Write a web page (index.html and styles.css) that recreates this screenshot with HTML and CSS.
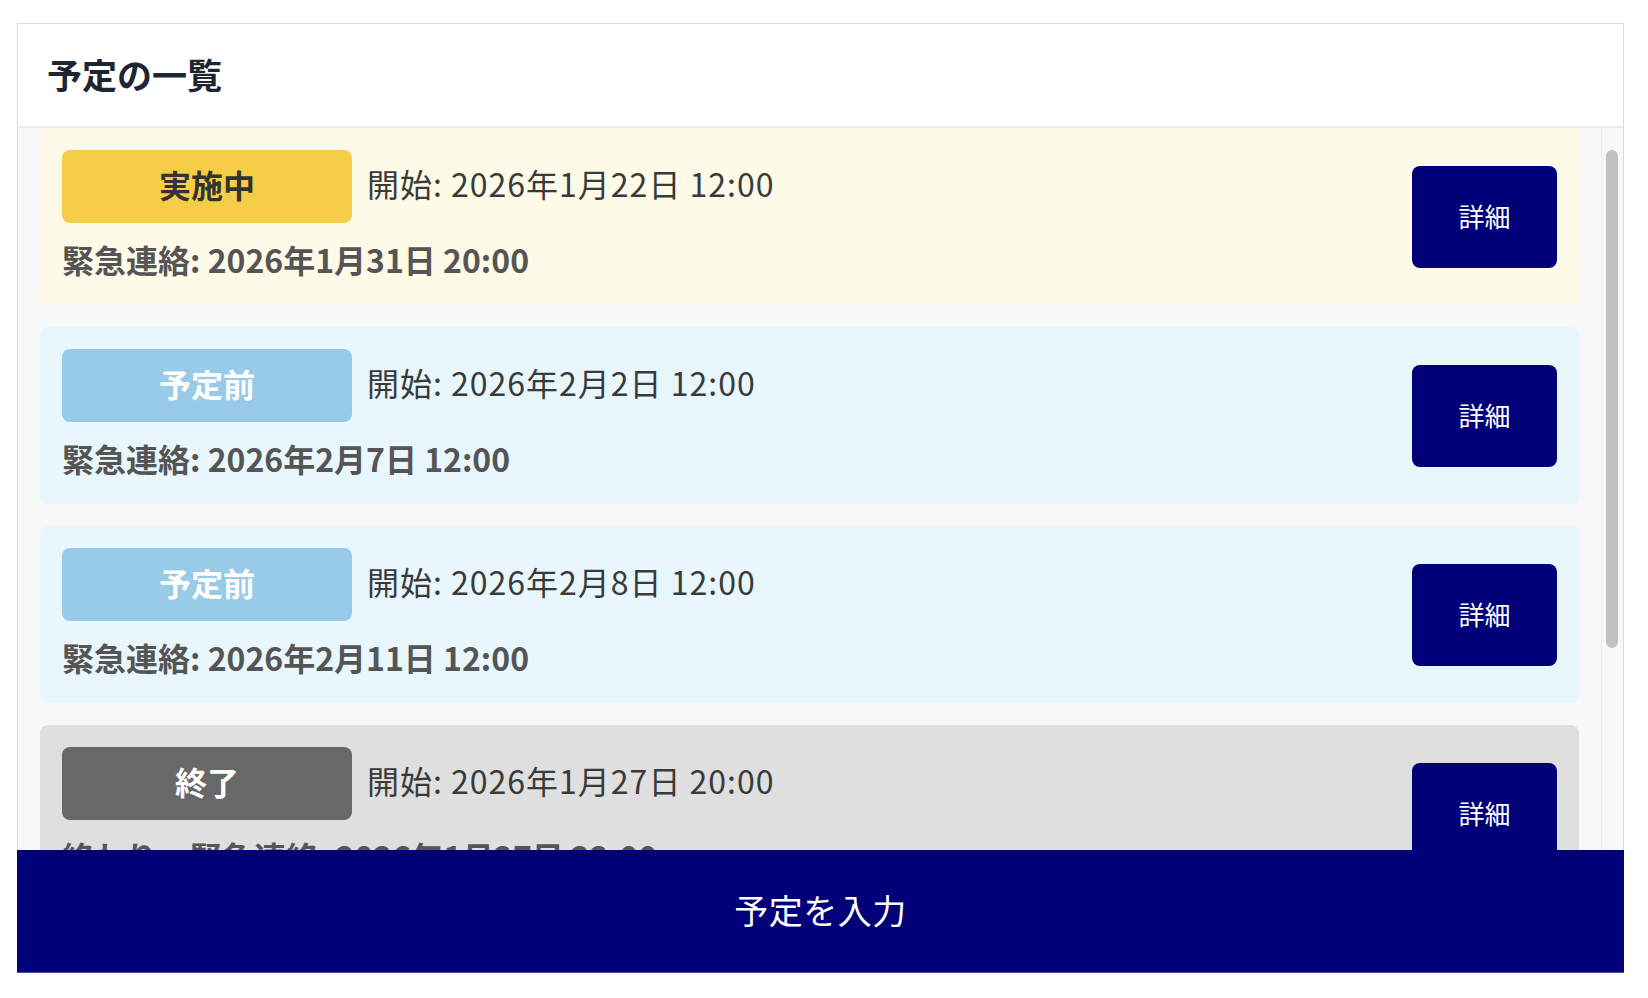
FILE: index.html
```html
<!DOCTYPE html>
<html lang="ja">
<head>
<meta charset="utf-8">
<title>予定の一覧</title>
<link rel="stylesheet" href="styles.css">
</head>
<body>
<div class="page">
  <section class="panel">
    <header class="panel-head">
      <h1 class="title">予定の一覧</h1>
    </header>
    <div class="body">
      <div class="list">
        <div class="card card-active">
          <div class="info">
            <div class="row">
              <span class="badge badge-active">実施中</span>
              <span class="start">開始: 2026年1月22日 12:00</span>
            </div>
            <div class="emergency">緊急連絡: 2026年1月31日 20:00</div>
          </div>
          <button class="detail">詳細</button>
        </div>
        <div class="card card-before">
          <div class="info">
            <div class="row">
              <span class="badge badge-before">予定前</span>
              <span class="start">開始: 2026年2月2日 12:00</span>
            </div>
            <div class="emergency">緊急連絡: 2026年2月7日 12:00</div>
          </div>
          <button class="detail">詳細</button>
        </div>
        <div class="card card-before">
          <div class="info">
            <div class="row">
              <span class="badge badge-before">予定前</span>
              <span class="start">開始: 2026年2月8日 12:00</span>
            </div>
            <div class="emergency">緊急連絡: 2026年2月11日 12:00</div>
          </div>
          <button class="detail">詳細</button>
        </div>
        <div class="card card-done">
          <div class="info">
            <div class="row">
              <span class="badge badge-done">終了</span>
              <span class="start">開始: 2026年1月27日 20:00</span>
            </div>
            <div class="emergency">終わり　緊急連絡: 2026年1月27日 22:00</div>
          </div>
          <button class="detail">詳細</button>
        </div>
      </div>
      <div class="scrollbar"><div class="thumb"></div></div>
    </div>
    <button class="add">予定を入力</button>
  </section>
</div>
</body>
</html>
```

FILE: styles.css
```css
* { box-sizing: border-box; }
html, body { margin: 0; padding: 0; background: #ffffff; }
body { font-family: "Noto Sans CJK JP", "Noto Sans", sans-serif; }

.page { padding: 23px 24px 25px 17px; }

.panel {
  height: 950px;
  border: 1px solid #dcdcdc;
  display: grid;
  grid-template-rows: 104px 1fr 122px;
  background: #fff;
}

.panel-head {
  border-bottom: 2px solid #ececec;
  display: flex;
  align-items: center;
  padding: 0 0 4px 29px;
}
.title {
  margin: 0;
  font-size: 35px;
  font-weight: 700;
  color: #1f2633;
  line-height: 1;
}

.body {
  display: flex;
  min-height: 0;
  overflow: hidden;
  background: #f8f8f8;
}
.list {
  flex: 1;
  padding: 0 22px;
  display: flex;
  flex-direction: column;
  gap: 22px;
  overflow: hidden;
}

.card {
  flex: none;
  display: flex;
  align-items: center;
  justify-content: space-between;
  padding: 22px;
  border-radius: 8px;
}
.card-active { background: #fefae8; }
.card-before { background: #e8f6fd; }
.card-done { background: #dfdfdf; }

.row { display: flex; align-items: center; gap: 15px; height: 73px; }

.badge {
  width: 290px;
  height: 73px;
  border-radius: 8px;
  display: flex;
  align-items: center;
  justify-content: center;
  padding-bottom: 5px;
  font-size: 32px;
  font-weight: 700;
}
.badge-active { background: #f6cd46; color: #333; }
.badge-before { background: #98cbe8; color: #fff; }
.badge-done { background: #686868; color: #fff; }

.start {
  font-size: 32px;
  line-height: 1;
  padding-bottom: 8px;
  color: #3a3a3a;
  letter-spacing: 1px;
}
.emergency {
  margin-top: 14px;
  margin-bottom: 2px;
  line-height: 44px;
  font-size: 32px;
  font-weight: 700;
  color: #555;
  letter-spacing: 0;
}

.detail {
  width: 145px;
  height: 102px;
  border: none;
  border-radius: 8px;
  background: #000078;
  color: #fff;
  font-family: inherit;
  font-size: 26px;
  padding: 0 0 2px;
}

.scrollbar {
  width: 22px;
  flex: none;
  border-left: 1px solid #ececec;
  background: #f8f8f8;
  padding: 22px 0 0 4px;
}
.thumb {
  width: 12px;
  height: 498px;
  border-radius: 6px;
  background: #c1c1c1;
}

.add {
  margin: 0 -1px -1px -1px;
  border: none;
  border-bottom: 1px solid #4a4aa0;
  background: #000078;
  color: #fff;
  font-family: inherit;
  font-size: 34px;
  font-weight: 400;
  letter-spacing: 0.5px;
  padding: 0 0 4px;
}
```
